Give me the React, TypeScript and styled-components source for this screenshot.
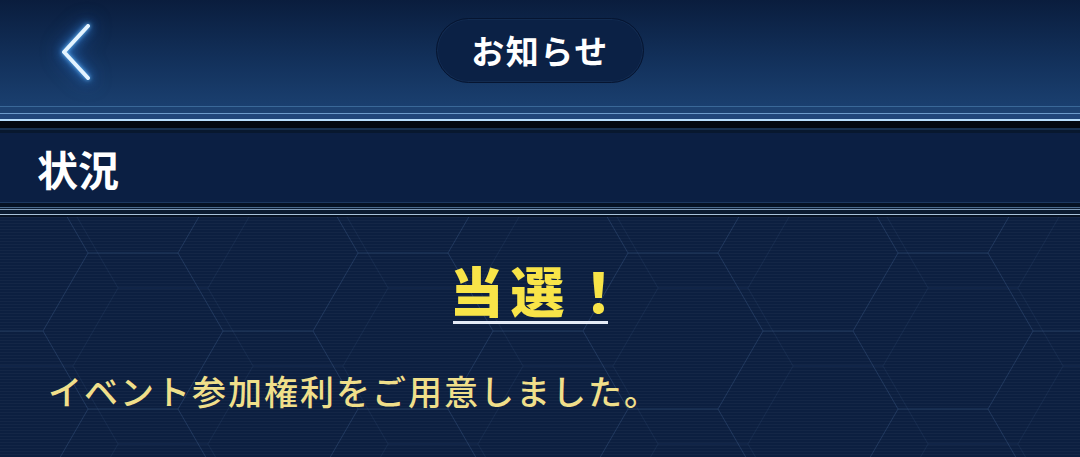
import React from 'react'
import styled, { createGlobalStyle } from 'styled-components'

const GlobalStyle = createGlobalStyle`
  html, body {
    margin: 0;
    padding: 0;
    background: #0b1d3c;
  }
  body {
    font-family: "Noto Sans CJK JP", "Noto Sans", sans-serif;
    overflow: hidden;
  }
`

// one tile of the faint hexagon lattice behind the content
const hexTile = `<svg xmlns='http://www.w3.org/2000/svg' width='270' height='156' viewBox='0 0 270 156'><g fill='none' stroke='#5b82bd' stroke-width='1'><path stroke-opacity='0.22' d='M0 78 L45 0 L135 0 L180 78 L135 156 L45 156 Z M180 78 L270 78'/><path stroke-opacity='0.1' d='M30 113 L75 35 L165 35 L210 113 L165 191 L75 191 Z M210 113 L300 113 M-60 113 L30 113 M75 35 L30 -43 M165 35 L210 -43'/></g></svg>`
const hexUrl = `url("data:image/svg+xml,${encodeURIComponent(hexTile)}")`

const Screen = styled.div`
  width: 1080px;
  height: 457px;
  display: flex;
  flex-direction: column;
  overflow: hidden;
`

const Header = styled.header`
  height: 106px;
  display: grid;
  grid-template-columns: 1fr auto 1fr;
  align-items: center;
  padding-bottom: 6px;
  box-sizing: border-box;
  background: linear-gradient(to bottom, #0a1d3d 0%, #12305a 55%, #1a3f6f 100%);
`

const BackButton = styled.button`
  justify-self: start;
  margin: 4px 0 0 52px;
  width: 50px;
  height: 64px;
  padding: 0;
  border: none;
  background: none;
  cursor: pointer;
  filter: drop-shadow(0 0 2px #6cc0ff) drop-shadow(0 0 5px rgba(50, 130, 220, 0.8))
    drop-shadow(0 0 9px rgba(40, 110, 200, 0.6));
`

const TitlePill = styled.div`
  width: 208px;
  height: 65px;
  border-radius: 33px;
  background: #0b2145;
  border: 1px solid #061531;
  box-shadow: inset 0 0 0 1px rgba(60, 100, 150, 0.15);
  box-sizing: border-box;
  display: flex;
  align-items: center;
  justify-content: center;
  color: #ffffff;
  font-size: 33px;
  font-weight: 700;
  letter-spacing: 1.5px;
`

const TopRule = styled.div`
  height: 27px;
  background: linear-gradient(
    to bottom,
    #3a6898 0 1px,
    #1d4272 1px 7px,
    #6d9bcb 7px 8px,
    #21467a 8px 13px,
    #b8defc 13px 15px,
    #03080f 15px 22px,
    #17304f 22px 24px,
    #08182f 24px 27px
  );
`

const SectionBar = styled.div`
  height: 69px;
  display: flex;
  align-items: center;
  padding-left: 37px;
  background: #0b1f43;
  color: #ffffff;
  font-size: 41px;
  font-weight: 700;
`

const BottomRule = styled.div`
  height: 15px;
  background: linear-gradient(
    to bottom,
    #1c3860 0 1px,
    #061224 1px 5px,
    #4b6a8c 5px 6px,
    #0a1a30 6px 7px,
    #7d99b6 7px 8px,
    #0a1a30 8px 12px,
    #a8c2da 12px 13px,
    #061224 13px 15px
  );
`

const Body = styled.main`
  flex: 1;
  display: flex;
  flex-direction: column;
  background-color: #0c1f40;
  background-image:
    repeating-linear-gradient(to bottom, rgba(255, 255, 255, 0.03) 0 1px, transparent 1px 3px),
    ${hexUrl};
  background-position: 0 0, 43px 36px;
`

const ResultTitle = styled.h1`
  align-self: center;
  margin: 46px 0 0 -20px;
  padding: 0 0 4px;
  border-bottom: 3px solid #e4ebf6;
  color: #f8e448;
  font-size: 54px;
  font-weight: 900;
  line-height: 1;
  letter-spacing: 7px;
`

// trims the side bearings and trailing spacing so the rule spans the glyphs only
const TitleText = styled.span`
  display: inline-block;
  margin: 0 -25px 0 -3px;
`

const Message = styled.p`
  margin: 50px 0 0 48px;
  color: #f0df8a;
  font-size: 34px;
  font-weight: 500;
  line-height: 1;
  letter-spacing: 2px;
`

const ChevronLeft = () => (
  <svg width="50" height="64" viewBox="0 0 50 64" fill="none">
    <path d="M36 6 L12 32 L36 58" stroke="#e4f4ff" strokeWidth="4" strokeLinecap="round" strokeLinejoin="round" />
  </svg>
)

export default function App() {
  return (
    <>
      <GlobalStyle />
      <Screen>
        <Header>
          <BackButton aria-label="戻る">
            <ChevronLeft />
          </BackButton>
          <TitlePill>お知らせ</TitlePill>
          <div />
        </Header>
        <TopRule />
        <SectionBar>状況</SectionBar>
        <BottomRule />
        <Body>
          <ResultTitle>
            <TitleText>当選！</TitleText>
          </ResultTitle>
          <Message>イベント参加権利をご用意しました。</Message>
        </Body>
      </Screen>
    </>
  )
}
